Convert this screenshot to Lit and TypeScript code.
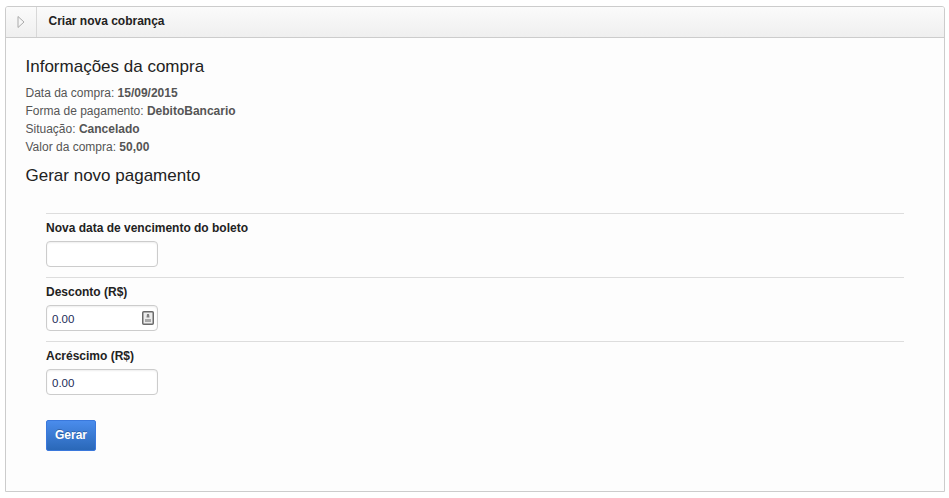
import { LitElement, html, css } from "lit";
import { customElement } from "lit/decorators.js";

@customElement("app-root")
export class AppRoot extends LitElement {
  static styles = css`
    :host { display: block; font-family: "Liberation Sans", Arial, sans-serif; color: #555; background: #fff; height: 498px; box-sizing: border-box; padding: 6px 4px 0 5px; }
    .panel { border: 1px solid #ccc; border-radius: 3px 3px 0 0; height: 486px; box-sizing: border-box; background: #fdfdfd; overflow: hidden; }
    .head { height: 30px; display: flex; align-items: stretch; background: linear-gradient(#fbfbfb, #efefef); border-bottom: 1px solid #ccc; }
    .tog { width: 30px; border-right: 1px solid #d8d8d8; display: flex; align-items: center; justify-content: center; }
    .title { font-size: 12px; font-weight: bold; color: #222; padding-left: 11.5px; line-height: 28px; }
    .body { padding: 19px 20px 0 19.5px; }
    h3 { margin: 0; font-weight: normal; font-size: 17px; color: #222; line-height: 20px; }
    .info { margin-top: 7px; font-size: 12px; line-height: 18.12px; height: 73px; }
    .info b { color: #555; }
    .gen { margin-top: 9px; }
    form { margin: 27px 20px 0 20.5px; }
    .row { border-top: 1px solid #ddd; padding: 7px 0 0; height: 56px; box-sizing: content-box; }
    label { display: block; font-size: 12px; font-weight: bold; color: #222; line-height: 14px; }
    .inp { margin-top: 6px; width: 112px; height: 26px; box-sizing: border-box; border: 1px solid #ccc; border-radius: 4px; background: #fff; box-shadow: inset 0 1px 2px rgba(0,0,0,.07); font-size: 11.5px; color: #1c2c58; padding: 0 3px 0 5px; display: flex; align-items: center; justify-content: space-between; }
    .val { padding-top: 2px; }
    button { display: block; margin-top: 15px; width: 50px; height: 31px; border: 1px solid #3a78dc; border-radius: 2px; background: linear-gradient(#4a8cec, #2a68b8); color: #fff; font: bold 12px "Liberation Sans", Arial, sans-serif; text-shadow: 0 -1px 0 rgba(0,0,0,.25); padding: 0 0 1px; }
  `;
  render() {
    return html`<div class="panel">
      <div class="head">
        <div class="tog"><svg width="8" height="14" viewBox="0 0 8 14"><path d="M1 1.500l6 5.500-6 5.500z" fill="#f6f6f6" stroke="#aaa"/></svg></div>
        <div class="title">Criar nova cobrança</div>
      </div>
      <div class="body">
        <h3>Informações da compra</h3>
        <div class="info">
          <div>Data da compra: <b>15/09/2015</b></div>
          <div>Forma de pagamento: <b>DebitoBancario</b></div>
          <div>Situação: <b>Cancelado</b></div>
          <div>Valor da compra: <b>50,00</b></div>
        </div>
        <h3 class="gen">Gerar novo pagamento</h3>
        <form @submit=${(e: Event) => e.preventDefault()}>
          <div class="row"><label>Nova data de vencimento do boleto</label><div class="inp"></div></div>
          <div class="row"><label>Desconto (R$)</label><div class="inp"><span class="val">0.00</span>
            <svg width="12" height="14" viewBox="0 0 12 14"><rect x=".75" y=".75" width="10.500" height="12.500" rx="1" fill="#ececec" stroke="#6a6a6a" stroke-width="1.500"/><path d="M5 3h2l.5 3.500h-3z" fill="#808080"/><path d="M3 8h6v3H3z" fill="#aaa"/></svg></div></div>
          <div class="row"><label>Acréscimo (R$)</label><div class="inp"><span class="val">0.00</span></div></div>
          <button>Gerar</button>
        </form>
      </div>
    </div>`;
  }
}
